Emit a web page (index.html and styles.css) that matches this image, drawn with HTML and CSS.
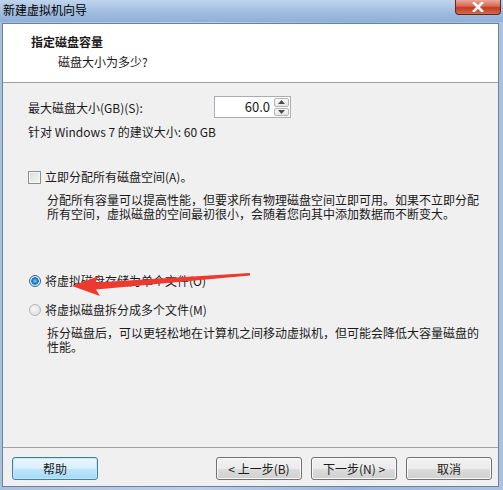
FILE: index.html
```html
<!DOCTYPE html>
<html lang="zh-CN">
<head>
    <meta charset="UTF-8">
    <title>新建虚拟机向导</title>
    <link rel="stylesheet" href="styles.css">
</head>
<body>
    <div class="window">
        <div class="titlebar">
            <span class="title">新建虚拟机向导</span>
            <div class="close-btn">
                <svg width="14" height="10" viewBox="0 0 14 10">
                    <path d="M3 1 L11 9 M11 1 L3 9" stroke="#fff" stroke-width="2.6" stroke-linecap="square"/>
                </svg>
            </div>
        </div>

        <div class="client">
            <div class="header">
                <div class="header-title">指定磁盘容量</div>
                <div class="header-sub">磁盘大小为多少?</div>
            </div>

            <div class="body">
                <div class="size-row">
                    <span>最大磁盘大小(GB)(S):</span>
                    <div class="spin">
                        <div class="spin-value">60.0</div>
                        <div class="spin-btns">
                            <div class="spin-btn">
                                <svg width="7" height="4" viewBox="0 0 7 4"><path d="M0 4 L3.5 0 L7 4 Z" fill="#4d4d4d"/></svg>
                            </div>
                            <div class="spin-btn">
                                <svg width="7" height="4" viewBox="0 0 7 4"><path d="M0 0 L3.5 4 L7 0 Z" fill="#4d4d4d"/></svg>
                            </div>
                        </div>
                    </div>
                </div>
                <div class="recommend">针对 Windows 7 的建议大小: 60 GB</div>

                <div class="option check-row">
                    <span class="checkbox"></span>
                    <span>立即分配所有磁盘空间(A)。</span>
                </div>
                <div class="desc">分配所有容量可以提高性能，但要求所有物理磁盘空间立即可用。如果不立即分配所有空间，虚拟磁盘的空间最初很小，会随着您向其中添加数据而不断变大。</div>

                <div class="option radio-first">
                    <span class="radio checked"></span>
                    <span>将虚拟磁盘存储为单个文件(O)</span>
                </div>
                <div class="option radio-second">
                    <span class="radio"></span>
                    <span>将虚拟磁盘拆分成多个文件(M)</span>
                </div>
                <div class="desc">拆分磁盘后，可以更轻松地在计算机之间移动虚拟机，但可能会降低大容量磁盘的性能。</div>
            </div>

            <div class="footer">
                <button class="btn btn-focus">帮助</button>
                <div class="nav-btns">
                    <button class="btn">&lt; 上一步(B)</button>
                    <button class="btn">下一步(N) &gt;</button>
                    <button class="btn">取消</button>
                </div>
            </div>
        </div>

        <!-- red annotation arrow drawn over the first radio -->
        <svg class="arrow" width="503" height="490" viewBox="0 0 503 490">
            <polygon points="72,286 99,276 95,282.5 250,273 250,275.5 96,289.5 100,296" fill="#ee3a2e"/>
        </svg>
    </div>
</body>
</html>
```

FILE: styles.css
```css
html, body {
    margin: 0;
    padding: 0;
}
body {
    font-family: "Noto Sans CJK SC", "Liberation Sans", sans-serif;
    font-size: 12px;
    color: #1a1a1a;
    background-color: #9fb9da;
}
.window {
    position: relative;
    width: 503px;
    height: 490px;
    display: flex;
    flex-direction: column;
    background: linear-gradient(to right, #a9c1df, #b9cfe8 40%, #9ab7db 70%, #aac3e2);
}
.titlebar {
    height: 22px;
    display: flex;
    align-items: flex-start;
    justify-content: space-between;
    background: linear-gradient(to bottom, #c0d4ec, #9ebbde 60%, #8fb0d8);
}
.title {
    margin-left: 3px;
    margin-top: 2px;
    line-height: 16px;
    font-size: 12px;
    color: #000;
}
.close-btn {
    width: 46px;
    height: 15px;
    margin-right: 2px;
    box-sizing: border-box;
    border: 1px solid #5a2a24;
    border-top: none;
    border-radius: 0 0 4px 4px;
    background: linear-gradient(to bottom, #e9a99c, #d8654f 45%, #c13a22 55%, #d86a4a);
    display: flex;
    align-items: center;
    justify-content: center;
}
.client {
    flex: 1;
    margin: 1px 4px 3px 2px;
    border: 1px solid #6c819f;
    background-color: #f0f0f0;
    display: flex;
    flex-direction: column;
}
.header {
    height: 59px;
    background-color: #fff;
    border-bottom: 1px solid #a0a0a0;
    box-sizing: border-box;
    padding: 10px 0 0 28px;
}
.header-title {
    font-weight: bold;
    line-height: 16px;
}
.header-sub {
    margin-top: 4px;
    margin-left: 27px;
    line-height: 16px;
}
.body {
    flex: 1;
    padding: 13px 0 0 25px;
}
.size-row {
    display: flex;
    align-items: center;
    height: 22px;
}
.size-row > span {
    width: 186px;
}
.spin {
    display: flex;
    width: 77px;
    height: 22px;
    box-sizing: border-box;
    border: 1px solid #abadb3;
    background-color: #fff;
}
.spin-value {
    flex: 1;
    text-align: right;
    padding-right: 3px;
    line-height: 20px;
    font-size: 13px;
}
.spin-btns {
    width: 15px;
    display: flex;
    flex-direction: column;
    gap: 1px;
    padding: 1px;
}
.spin-btn {
    flex: 1;
    border: 1px solid #b6b6b6;
    border-radius: 2px;
    background: linear-gradient(to bottom, #fafafa, #e6e6e6);
    display: flex;
    align-items: center;
    justify-content: center;
}
.recommend {
    margin-top: 7px;
    line-height: 14px;
}
.option {
    display: flex;
    align-items: center;
    gap: 4px;
    height: 14px;
    line-height: 14px;
}
.check-row {
    margin-top: 31px;
}
.radio-first {
    margin-top: 53px;
    margin-left: 1px;
}
.radio-second {
    margin-top: 15px;
    margin-left: 1px;
}
.checkbox {
    width: 13px;
    height: 13px;
    box-sizing: border-box;
    border: 1px solid #8e8f8f;
    background: linear-gradient(135deg, #dcdcdc, #f6f6f6);
    box-shadow: inset 0 0 0 1px #f4f4f4;
}
.radio {
    width: 12px;
    height: 12px;
    box-sizing: border-box;
    border-radius: 50%;
    border: 1px solid #b5b5b5;
    background: radial-gradient(circle at 40% 40%, #f8f8f8, #d8d8d8);
}
.radio.checked {
    border-color: #2c628b;
    background: radial-gradient(circle, #7ad1ff 0, #1f7fc4 2.5px, #2c74b2 3.5px, #d6e9f6 4px, #eef6fc 6px);
}
.desc {
    margin: 9px 8px 0 19px;
    line-height: 14px;
}
.footer {
    height: 39px;
    border-top: 1px solid #a0a0a0;
    box-sizing: border-box;
    padding: 9px 6px 0 9px;
    display: flex;
    justify-content: space-between;
    align-items: flex-start;
}
.nav-btns {
    display: flex;
    gap: 9px;
}
.btn {
    width: 86px;
    height: 23px;
    padding: 0;
    font-family: inherit;
    font-size: 12px;
    color: #1a1a1a;
    border: 1px solid #707070;
    border-radius: 3px;
    background: linear-gradient(to bottom, #f2f2f2, #ebebeb 50%, #dddddd 51%, #cfcfcf);
    box-shadow: inset 0 0 0 1px #fbfbfb;
}
.btn-focus {
    border-color: #3c7fb1;
    background: linear-gradient(to bottom, #eaf6fd, #d9f0fc 50%, #bee6fd 51%, #a7d9f5);
    box-shadow: inset 0 0 0 1px #c4e5f6;
}
.arrow {
    position: absolute;
    left: 0;
    top: 0;
    pointer-events: none;
}
```
